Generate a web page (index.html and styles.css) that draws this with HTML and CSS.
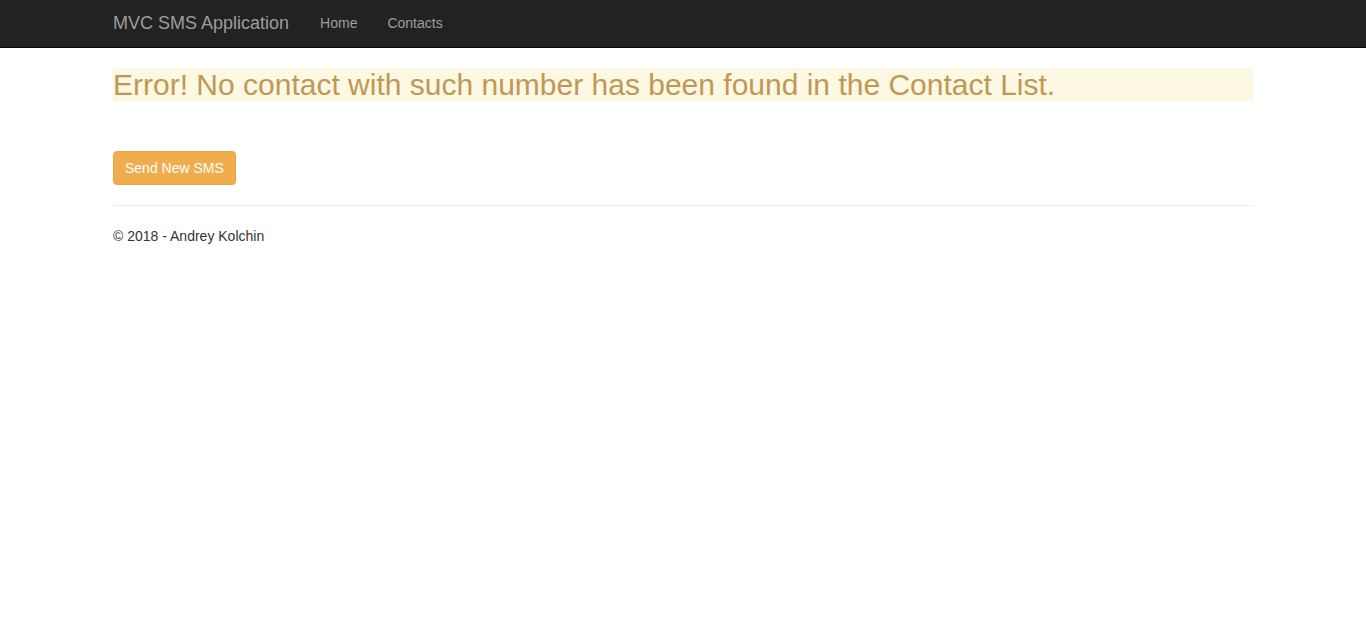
FILE: index.html
```html
<!DOCTYPE html>
<html>
<head>
<meta charset="utf-8">
<title>MVC SMS Application</title>
<link rel="stylesheet" href="styles.css">
</head>
<body>
<nav class="navbar">
  <div class="container navbar-inner">
    <a class="brand" href="#">MVC SMS Application</a>
    <ul class="nav">
      <li><a href="#">Home</a></li>
      <li><a href="#">Contacts</a></li>
    </ul>
  </div>
</nav>
<div class="container body-content">
  <h2 class="alert-heading">Error! No contact with such number has been found in the Contact List.</h2>
  <div class="actions">
    <a class="btn btn-warning" href="#">Send New SMS</a>
  </div>
  <hr class="divider">
  <footer class="footer">
    <p>&copy; 2018 - Andrey Kolchin</p>
  </footer>
</div>
</body>
</html>
```
FILE: styles.css
```css
* { box-sizing: border-box; }
html, body { margin: 0; padding: 0; }
body {
  font-family: "Liberation Sans", Arial, Helvetica, sans-serif;
  font-size: 14px;
  line-height: 20px;
  color: #333;
  background: #fff;
}
.container {
  width: 1170px;
  margin: 0 auto;
  padding: 0 15px;
}
.navbar {
  background: #222;
  border-bottom: 1px solid #080808;
  height: 48px;
}
.navbar-inner {
  display: flex;
  align-items: stretch;
  height: 47px;
}
.brand {
  font-size: 18px;
  line-height: 20px;
  color: #9d9d9d;
  text-decoration: none;
  padding: 13px 16px 14px 0;
}
.nav {
  list-style: none;
  margin: 0;
  padding: 0;
  display: flex;
}
.nav a {
  display: block;
  padding: 13px 15px 14px;
  color: #9d9d9d;
  text-decoration: none;
  font-size: 14px;
  line-height: 20px;
}
.body-content { padding-top: 20px; }
.alert-heading {
  margin: 0 0 50px;
  font-size: 30px;
  font-weight: 400;
  line-height: 33px;
  background: #fcf8e3;
  color: #c09853;
}
.actions { display: flex; }
.btn {
  display: inline-block;
  padding: 6px 11px;
  font-size: 14px;
  line-height: 20px;
  border: 1px solid transparent;
  border-radius: 4px;
  text-decoration: none;
}
.btn-warning {
  background: #f0ad4e;
  border-color: #eea236;
  color: #fff;
}
.divider {
  margin: 20px 0;
  border: 0;
  border-top: 1px solid #eee;
}
.footer p { margin: 0 0 10px; }
```
